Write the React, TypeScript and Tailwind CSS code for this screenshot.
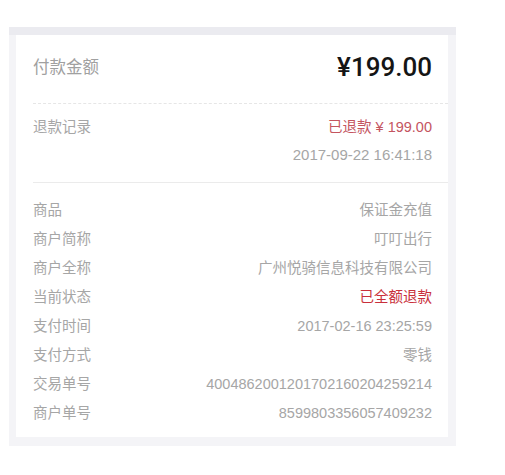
import React from 'react';

const rows: { label: string; value: string; red?: boolean }[] = [
  { label: '商品', value: '保证金充值' },
  { label: '商户简称', value: '叮叮出行' },
  { label: '商户全称', value: '广州悦骑信息科技有限公司' },
  { label: '当前状态', value: '已全额退款', red: true },
  { label: '支付时间', value: '2017-02-16 23:25:59' },
  { label: '支付方式', value: '零钱' },
  { label: '交易单号', value: '4004862001201702160204259214' },
  { label: '商户单号', value: '8599803356057409232' },
];

const App: React.FC = () => {
  return (
    <div
      className="min-h-screen bg-white"
      style={{ fontFamily: '"Liberation Sans", "Noto Sans CJK SC", sans-serif' }}
    >
      <div className="ml-[9px] pt-[27px]">
        <div className="w-[447px] bg-[#f4f4f7] border-t-[8px] border-t-[#ebebf0] pl-[7px] pr-[8px] pb-[9px]">
          <div className="bg-white pl-[17px]">
            {/* amount */}
            <div className="h-[68px] pb-[4px] pr-[16px] flex items-center justify-between">
              <span className="text-[16.5px] text-[#a0a0a0]">付款金额</span>
              <span
                className="text-[26px] font-medium text-[#151515]"
                style={{ fontFamily: 'Roboto, "Liberation Sans", sans-serif' }}
              >
                ¥199.00
              </span>
            </div>
            <div className="border-t border-dashed border-[#e6e6e6]" />

            {/* refund record */}
            <div className="pt-[13px] pb-[17px] pr-[16px] flex justify-between">
              <span className="text-[14.5px] leading-[20px] text-[#a6a6a6]">退款记录</span>
              <div className="flex flex-col items-end gap-[8px]">
                <span className="text-[14.5px] leading-[20px] text-[#c4555f]">已退款 ¥ 199.00</span>
                <span className="text-[15px] leading-[20px] text-[#a6a6a6]">2017-09-22 16:41:18</span>
              </div>
            </div>
            <div className="border-t border-[#ebebeb]" />

            {/* details */}
            <div className="pt-[13px] pb-[9px] pr-[16px] flex flex-col">
              {rows.map(r => (
                <div key={r.label} className="h-[29px] flex items-center justify-between text-[14.5px]">
                  <span className="text-[#a6a6a6]">{r.label}</span>
                  <span className={r.red ? 'text-[#c9303b]' : 'text-[#a6a6a6]'}>{r.value}</span>
                </div>
              ))}
            </div>
          </div>
        </div>
      </div>
    </div>
  );
};

export default App;
